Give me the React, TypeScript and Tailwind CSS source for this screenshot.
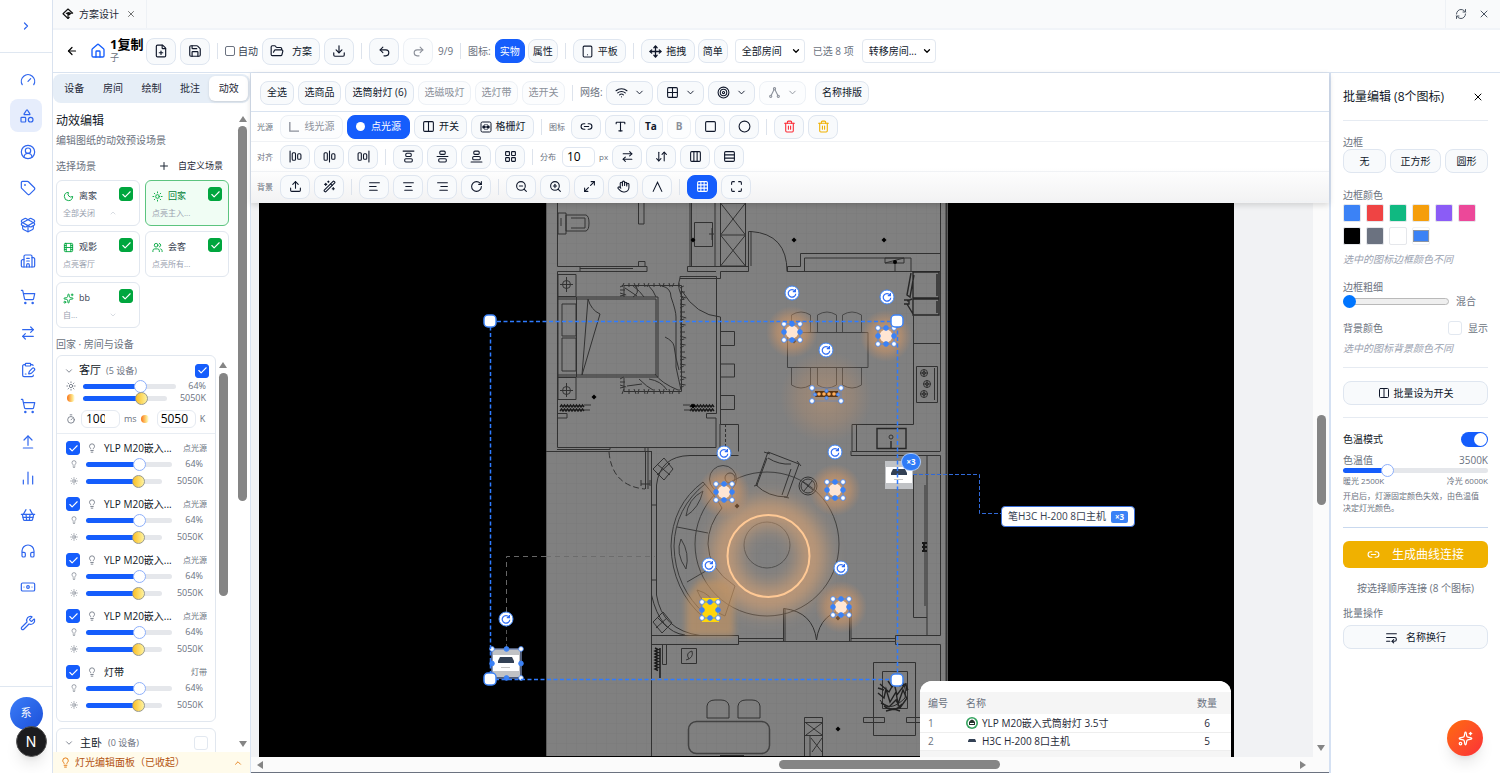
import React from "react";
import {
  AlignHorizontalJustifyCenter, AlignHorizontalJustifyEnd, AlignHorizontalJustifyStart,
  AlignVerticalJustifyCenter, AlignVerticalJustifyEnd, AlignVerticalJustifyStart,
  ArrowDownUp, ArrowLeft, ArrowRightLeft, ArrowUpFromLine, Banknote, Building2,
  ChartNoAxesColumn, Check, ChevronDown, ChevronRight, ChevronUp, Circle, CircleUserRound,
  ClipboardPenLine, Columns2, Columns3, Download, FilePlus, Film, FolderOpen, Gauge, Grid2x2, Grid3x3,
  Hand, Headphones, House, LayoutGrid, Lightbulb, Link2, Maximize, Maximize2, Moon, Move, PackageOpen,
  Plus, Redo2, RefreshCw, RotateCw, Rows3, Save, Shapes, ShoppingBasket, ShoppingCart, Sparkles, Square,
  Sun, Tablet, Tag, Target, TextAlignCenter, TextAlignEnd, TextAlignStart, TextWrap, Timer, Trash2, Type,
  Undo2, Upload, Users, WandSparkles, Wifi, Wrench, X, ZoomIn, ZoomOut,
} from "lucide-react";

const btn =
  "flex shrink-0 items-center justify-center rounded-lg border border-[#dfe6f0] bg-[#f8fafc] text-[10px] text-[#0f172a] whitespace-nowrap";
const btnOff =
  "flex shrink-0 items-center justify-center rounded-lg border border-[#edf1f6] bg-[#fcfdfe] text-[10px] text-[#8b909a] whitespace-nowrap";
const btnOn =
  "flex shrink-0 items-center justify-center rounded-lg border border-[#155dfc] bg-[#155dfc] text-[10px] text-white whitespace-nowrap";

function Sep() {
  return <span className="mx-[3px] h-4 w-px shrink-0 bg-[#dde3ec]" />;
}

function Tick({ label, tone, checked = true }: { label: string; tone: "blue" | "green"; checked?: boolean }) {
  return (
    <span className="grid shrink-0 place-items-center">
      <input
        type="checkbox"
        aria-label={label}
        defaultChecked={checked}
        className={
          tone === "green"
            ? "col-start-1 row-start-1 size-[14px] appearance-none rounded-[3px] border border-[#e2e8f0] bg-white checked:border-[#00a63e] checked:bg-[#00a63e]"
            : "col-start-1 row-start-1 size-[14px] appearance-none rounded-[3px] border border-[#e2e8f0] bg-white checked:border-[#155dfc] checked:bg-[#155dfc]"
        }
      />
      {checked && <Check className="pointer-events-none col-start-1 row-start-1 size-[11px] text-white" strokeWidth={2.4} />}
    </span>
  );
}

const sliderBase =
  "block h-[5px] min-w-0 appearance-none rounded-full [&::-webkit-slider-thumb]:appearance-none [&::-webkit-slider-thumb]:size-[13px] [&::-webkit-slider-thumb]:rounded-full [&::-webkit-slider-thumb]:border";
const brightThumb = "[&::-webkit-slider-thumb]:border-[#8eb0fb] [&::-webkit-slider-thumb]:bg-white";
const warmThumb =
  "[&::-webkit-slider-thumb]:border-[#9a9a8c] [&::-webkit-slider-thumb]:bg-[linear-gradient(to_right,#fbbf24,#fef3a0)]";

function Brightness({ label }: { label: string }) {
  return (
    <input type="range" aria-label={label} min={0} max={100} defaultValue={64}
      className={`${sliderBase} ${brightThumb} flex-1 bg-[linear-gradient(to_right,#155dfc_62%,#e5e7eb_62%)]`} />
  );
}
function Warmth({ label }: { label: string }) {
  return (
    <input type="range" aria-label={label} min={2500} max={6000} step={50} defaultValue={5050}
      className={`${sliderBase} ${warmThumb} flex-1 bg-[linear-gradient(to_right,#155dfc_69%,#e5e7eb_69%)]`} />
  );
}

function WarmDot() {
  return <span className="size-2 shrink-0 rounded-full bg-[linear-gradient(to_right,#f97316,#fde68a_70%,#fff)]" />;
}

function Arrow({ dir }: { dir: "up" | "down" | "left" | "right" }) {
  const d = { up: "M4 1 8 7H0Z", down: "M4 7 8 1H0Z", left: "M1 4 7 0V8Z", right: "M7 4 1 0V8Z" }[dir];
  return (
    <svg viewBox="0 0 8 8" className="size-2 shrink-0" fill="#858585"><path d={d} /></svg>
  );
}

const navIcons = [
  Gauge, Shapes, CircleUserRound, Tag, PackageOpen, Building2, ShoppingCart, ArrowRightLeft, ClipboardPenLine,
  ShoppingCart, ArrowUpFromLine, ChartNoAxesColumn, ShoppingBasket, Headphones, Banknote, Wrench,
];
const navNames = [
  "仪表盘", "方案", "账户", "标签", "产品", "公司", "采购", "调拨", "工单", "订单", "上传", "统计", "商城", "客服", "财务", "工具",
];

function SideNav() {
  return (
    <aside className="flex w-[53px] shrink-0 flex-col border-r border-[#d9e2ef] bg-white text-[#2f66ee]">
      <button aria-label="展开" className="flex h-[53px] shrink-0 items-center justify-center border-b border-[#dfe7f1]">
        <ChevronRight className="size-3" strokeWidth={2.4} />
      </button>
      <nav className="flex min-h-0 flex-1 flex-col items-center justify-between pt-[10px] pb-[46px] pl-1">
        {navIcons.map((Icon, i) => (
          <a key={i} href="#" aria-label={navNames[i]}
            className={i === 1 ? "-ml-1 flex h-[33px] w-8 items-center justify-center rounded-lg bg-[#e6edfc] pl-[2px]" : "flex h-[33px] w-8 items-center justify-center"}>
            <Icon className="size-4" strokeWidth={1.8} />
          </a>
        ))}
      </nav>
      <div className="flex h-[87px] shrink-0 flex-col items-center border-t border-[#dfe7f1] pt-[10px]">
        <button className="size-[33px] rounded-full bg-linear-to-br from-[#3b7cf8] to-[#1d4fd8] text-[11px] text-white">系</button>
        <button className="-mt-1 ml-[10px] size-[31px] rounded-full border border-[#555] bg-[#1c1c1e] font-['Inter',sans-serif] text-[14px] text-white shadow-lg">N</button>
      </div>
    </aside>
  );
}

function TabBar() {
  return (
    <div className="flex h-[30px] shrink-0 items-center border-b-2 border-[#f1f4f8] bg-[#f9fafb] text-[10px]">
      <div className="flex h-full items-center gap-1 border-r border-[#eef1f5] pr-[10px] pl-[9px]">
        <svg viewBox="0 0 24 24" className="mr-px size-3" fill="none" stroke="#111" strokeWidth="2.2">
          <path d="M22 11 12 2 2 11.500 12 21l3-3" strokeLinejoin="round" /><path d="M12 21v-8" /><path d="M7 11q5-6 14 0-4 0-5 3-3 2-5-1Z" fill="#111" stroke="none" />
        </svg>
        <a href="#" className="text-[#1f2937]">方案设计</a>
        <button aria-label="关闭标签"><X className="ml-[3px] size-2.5 text-[#555]" /></button>
      </div>
      <span className="flex-1" />
      <div className="flex h-full items-center gap-[11px] border-l border-[#eef1f5] pr-[10px] pl-[9px] text-[#4b5563]">
        <button aria-label="刷新"><RefreshCw className="size-3" /></button>
        <button aria-label="关闭"><X className="size-3" /></button>
      </div>
    </div>
  );
}

function Pick({ label, text, wide }: { label: string; text: string; wide?: boolean }) {
  return (
    <span className={wide ? "relative w-[74px]" : "relative w-[70px]"}>
      <select aria-label={label} className="h-6 w-full appearance-none rounded-sm border border-[#e2e8f0] bg-white pl-[6px] text-[10px] text-[#0f172a]">
        <option>{text}</option>
      </select>
      <ChevronDown className="pointer-events-none absolute top-[7px] right-1 size-[10px] text-black" strokeWidth={3} />
    </span>
  );
}

function Header() {
  return (
    <header className="flex h-[43px] shrink-0 items-center gap-1 border-b border-[#d9e3f0] bg-white pl-[13px] text-[10px] whitespace-nowrap text-[#6b7280]">
      <button aria-label="返回"><ArrowLeft className="mr-2 size-3 text-black" strokeWidth={2.4} /></button>
      <House className="size-4 shrink-0 text-[#155dfc]" />
      <div className="w-8 leading-[13px]">
        <h1 className="text-[13px] font-bold text-black">1复制</h1>
        <p className="text-[9px]">子</p>
      </div>
      <button aria-label="新建" className={`${btn} h-[27px] w-[30px]`}><FilePlus className="size-[14px]" /></button>
      <button aria-label="保存" className={`${btn} h-[27px] w-[30px]`}><Save className="size-[14px]" /></button>
      <Sep />
      <label className="flex items-center gap-[3px] text-[#374151]">
        <input type="checkbox" className="size-[10px] appearance-none rounded-xs border border-[#6b7280] bg-white" />自动
      </label>
      <button className={`${btn} h-[27px] w-[58px] gap-2`}><FolderOpen className="size-[14px]" />方案</button>
      <button aria-label="下载" className={`${btn} h-[27px] w-[30px]`}><Download className="size-[14px]" /></button>
      <Sep />
      <button aria-label="撤销" className={`${btn} h-[27px] w-[30px]`}><Undo2 className="size-[13px]" /></button>
      <button aria-label="重做" className={`${btnOff} h-[27px] w-[30px]`}><Redo2 className="size-[13px]" /></button>
      <span className="pl-px">9/9</span>
      <Sep />
      <span>图标:</span>
      <div className="flex gap-[3px]">
        <button className={`${btnOn} h-6 w-[30px]`}>实物</button>
        <button className={`${btn} h-6 w-[30px]`}>属性</button>
      </div>
      <Sep />
      <button className={`${btn} h-6 w-[53px] gap-1`}><Tablet className="size-[13px]" />平板</button>
      <Sep />
      <div className="flex gap-[3px]">
        <button className={`${btn} h-6 w-[54px] gap-1`}><Move className="size-[13px]" strokeWidth={2.4} />拖拽</button>
        <button className={`${btn} h-6 w-[30px]`}>简单</button>
      </div>
      <span className="ml-[3px] flex items-center gap-2">
        <Pick label="房间" text="全部房间" />
        <span>已选 8 项</span>
        <Pick label="转移房间" text="转移房间..." wide />
      </span>
    </header>
  );
}

type Scene = { name: string; note: string; icon: React.ElementType; active?: boolean; mark?: React.ElementType };
const scenes: Scene[] = [
  { name: "离家", note: "全部关闭", icon: Moon, mark: ChevronUp },
  { name: "回家", note: "点亮主入...", icon: Sun, active: true },
  { name: "观影", note: "点亮客厅", icon: Film },
  { name: "会客", note: "点亮所有...", icon: Users },
  { name: "bb", note: "自...", icon: Sparkles, mark: ChevronDown },
];

function SceneCard({ s }: { s: Scene }) {
  const Icon = s.icon;
  const Mark = s.mark;
  return (
    <div className={s.active
      ? "h-[46px] rounded-md border border-[#5cc47f] bg-[#f0fdf4] px-[6px] pt-[7px]"
      : "h-[46px] rounded-md border border-[#e1e7ef] bg-white px-[6px] pt-[7px]"}>
      <div className="flex h-4 items-center gap-[5px]">
        <Icon className="size-[11px] shrink-0 text-[#00a63e]" />
        <span className={s.active ? "flex-1 text-[9px] text-[#008236]" : "flex-1 text-[9px] text-[#374151]"}>{s.name}</span>
        <span className="-mt-1 flex"><Tick label={s.name} tone="green" /></span>
      </div>
      <div className="mt-[3px] flex items-center justify-between pr-4 text-[8px] leading-3 text-[#99a1af]">
        {s.note}{Mark && <Mark className="size-2 text-[#c4cad3]" />}
      </div>
    </div>
  );
}

const devices = [
  ["YLP M20嵌入...", "点光源"], ["YLP M20嵌入...", "点光源"], ["YLP M20嵌入...", "点光源"], ["YLP M20嵌入...", "点光源"], ["灯带", "灯带"],
];

function LeftPanel() {
  return (
    <section className="flex w-[198px] shrink-0 flex-col border-r border-[#d9e3f0] bg-white text-[#6b7280]">
      <div className="mt-px flex h-[29px] shrink-0 items-center rounded-lg bg-[#e6eef7] px-[2px] text-[10px] text-[#1f2937]">
        {["设备", "房间", "绘制", "批注", "动效"].map((t) => (
          <button key={t} className={t === "动效" ? "h-[25px] flex-1 rounded-md bg-white shadow-sm" : "h-[25px] flex-1"}>{t}</button>
        ))}
      </div>
      <div className="flex min-h-0 flex-1">
        <div className="flex w-[176px] shrink-0 flex-col overflow-hidden pt-2 pl-[3px]">
          <h2 className="text-[12px] leading-[20px] text-[#111827]">动效编辑</h2>
          <p className="text-[10px] leading-[18px]">编辑图纸的动效预设场景</p>
          <div className="mt-[7px] flex h-5 shrink-0 items-center justify-between pr-[6px] text-[10px]">
            选择场景
            <button className="flex items-center gap-2 text-[9px] text-[#1f2937]"><Plus className="size-3" />自定义场景</button>
          </div>
          <div className="mt-1 grid shrink-0 grid-cols-2 gap-[5px]">
            {scenes.map((s) => <SceneCard key={s.name} s={s} />)}
          </div>
          <p className="mt-2 shrink-0 text-[10px] leading-4">回家 · 房间与设备</p>
          <div className="mt-[3px] flex min-h-0 flex-1 overflow-hidden">
            <div className="w-[160px] shrink-0">
              <div className="rounded-md border border-[#e1e7ef] bg-white text-[9px]">
                <div className="h-[78px] border-b border-[#e8edf3] px-[6px] pt-[5px]">
                  <div className="flex h-[19px] items-center gap-[5px] pl-px">
                    <ChevronDown className="size-[10px]" />
                    <span className="text-[11px] text-[#111827]">客厅</span>
                    <span className="flex-1">(5 设备)</span>
                    <Tick label="客厅" tone="blue" />
                  </div>
                  <div className="flex h-3 items-center gap-[7px] pl-[3px]">
                    <Sun className="size-[10px] shrink-0" /><Brightness label="客厅亮度" />
                    <span className="w-[26px] pr-[3px] text-right">64%</span>
                  </div>
                  <div className="flex h-3 items-center gap-[8px] pl-1">
                    <WarmDot /><Warmth label="客厅色温" />
                    <span className="w-[34px] pr-[3px] text-right">5050K</span>
                  </div>
                  <div className="mt-[5px] flex h-5 items-center gap-1 pl-[3px]">
                    <Timer className="size-[10px] shrink-0" />
                    <input aria-label="渐变时间" defaultValue="1000" className="ml-px h-[18px] w-[39px] rounded-md border border-[#e5eaf1] pr-[14px] pl-1 text-[12px] text-black" />
                    ms<WarmDot />
                    <input aria-label="色温" defaultValue="5050" className="ml-1 h-[18px] w-[39px] rounded-md border border-[#e5eaf1] px-[3px] text-[12px] text-black" />
                    <span className="ml-auto pr-1">K</span>
                  </div>
                </div>
                <div className="flex flex-col gap-[5px] pt-[6px] pr-2 pb-[6px] pl-[9px]">
                  {devices.map(([name, kind], i) => (
                    <div key={i} className="h-[51px] shrink-0">
                      <div className="flex h-4 items-center gap-[7px]">
                        <Tick label={`${name} ${i + 1}`} tone="blue" />
                        <Lightbulb className="size-[10px] shrink-0" />
                        <span className="flex-1 text-[10px] whitespace-nowrap text-[#111827]">{name}</span>
                        <span className="text-[8px] whitespace-nowrap">{kind}</span>
                      </div>
                      <div className="flex h-4 items-center gap-2 pr-1 pl-1">
                        <Lightbulb className="size-2 shrink-0" /><Brightness label={`${name} ${i + 1} 亮度`} />
                        <span className="w-[23px] text-right">64%</span>
                      </div>
                      <div className="flex h-[18px] items-center gap-2 pr-1 pl-1">
                        <Sun className="size-2 shrink-0" /><Warmth label={`${name} ${i + 1} 色温`} />
                        <span className="w-[33px] text-right">5050K</span>
                      </div>
                    </div>
                  ))}
                </div>
              </div>
              <div className="mt-[6px] flex h-[30px] items-center gap-[6px] rounded-t-md border border-[#e1e7ef] px-[7px] text-[9px]">
                <ChevronDown className="size-[10px]" />
                <span className="text-[11px] leading-[14px] text-[#111827]">主卧</span>
                <span className="flex-1">(0 设备)</span>
                <Tick label="主卧" tone="blue" checked={false} />
              </div>
            </div>
          </div>
        </div>
        <div className="flex w-[21px] shrink-0">
          <div className="-ml-[12px] flex w-[12px] shrink-0 flex-col items-center gap-[4px] pt-[258px]">
            <Arrow dir="up" />
            <div className="h-[57%] w-[9px] rounded-full bg-[#858585]" />
          </div>
          <div className="flex flex-1 flex-col items-center gap-[3px] py-[12px] pl-[6px]">
            <Arrow dir="up" />
            <div className="h-[60%] w-[9px] rounded-full bg-[#858585]" />
            <span className="flex-1" />
            <span className="-mb-2 flex"><Arrow dir="down" /></span>
          </div>
        </div>
      </div>
      <button className="flex h-[21px] shrink-0 items-center gap-1 bg-[#fffbeb] px-[7px] text-[10px] text-[#b4530f]">
        <Lightbulb className="size-[11px] text-[#e17100]" />
        <span className="flex-1 text-left">灯光编辑面板（已收起）</span>
        <ChevronUp className="size-[10px] text-[#e17100]" />
      </button>
    </section>
  );
}

function IconBtn({ label, icon: Icon, off, on, red, gold, narrow }: {
  label: string; icon?: React.ElementType; off?: boolean; on?: boolean; red?: boolean; gold?: boolean; narrow?: string;
}) {
  return (
    <button aria-label={label} className={`${on ? btnOn : off ? btnOff : btn} h-6 ${narrow ? "w-6" : "w-[30px]"}`}>
      {Icon ? <Icon className={red ? "size-[13px] text-[#fb2c36]" : gold ? "size-[13px] text-[#f0b100]" : "size-[13px]"} /> : <b>{narrow}</b>}
    </button>
  );
}

function Branch({ className }: { className?: string }) {
  return (
    <svg viewBox="0 0 24 24" className={className} fill="none" stroke="currentColor" strokeWidth="2">
      <circle cx="12" cy="5" r="2" /><circle cx="5" cy="19" r="2" /><circle cx="19" cy="19" r="2" />
      <path d="M11 7 9 11l-3 6M13 7l2 4 3 6" />
    </svg>
  );
}
function Caret({ className }: { className?: string }) {
  return (
    <svg viewBox="0 0 24 24" className={className} fill="none" stroke="currentColor" strokeWidth="2" strokeLinecap="round"><path d="m4 21 8-17 8 17" /></svg>
  );
}
function Grille({ className }: { className?: string }) {
  return (
    <svg viewBox="0 0 24 24" className={className} fill="none" stroke="currentColor" strokeWidth="2">
      <rect x="2" y="2" width="20" height="20" rx="3" /><circle cx="8" cy="12" r="3.500" fill="currentColor" stroke="none" />
      <circle cx="16" cy="12" r="3.500" fill="currentColor" stroke="none" /><path d="M5 12h14M8 7h8M8 17h8" strokeWidth="1" />
    </svg>
  );
}

function Drop({ label, icon: Icon, off }: { label: string; icon: React.ElementType; off?: boolean }) {
  return (
    <button aria-label={label} className={`${off ? btnOff : btn} h-6 w-[47px] gap-[6px]`}>
      <Icon className="size-[13px]" /><ChevronDown className="size-[11px]" />
    </button>
  );
}

function ToolRows() {
  const row = "flex h-[30px] items-center gap-1 border-b border-[#f0f2f5] pl-[6px] text-[8px] whitespace-nowrap text-[#6b7280]";
  return (
    <div className="z-10 shrink-0 shadow-[0_2px_6px_rgba(0,0,0,0.15)]">
      <div className="flex h-[39px] items-center gap-1 border-b border-[#d9e3f0] bg-white pt-px pl-[9px] text-[10px] whitespace-nowrap text-[#6b7280]">
        <button className={`${btn} h-6 w-[34px]`}>全选</button>
        <button className={`${btn} h-6 w-[43px]`}>选商品</button>
        <button className={`${btn} h-6 w-[69px]`}>选筒射灯 (6)</button>
        <button className={`${btnOff} h-6 w-[53px]`}>选磁吸灯</button>
        <button className={`${btnOff} h-6 w-[43px]`}>选灯带</button>
        <button className={`${btnOff} h-6 w-[43px]`}>选开关</button>
        <Sep />
        <span className="w-[22px]">网络:</span>
        <Drop label="无线" icon={Wifi} /><Drop label="面板" icon={Grid2x2} /><Drop label="感应" icon={Target} /><Drop label="拓扑" icon={Branch} off />
        <button className={`${btn} ml-[5px] h-6 w-[54px]`}>名称排版</button>
      </div>
      <div className="bg-linear-to-b from-white from-60% to-[#f2f2f3] pb-px">
        <div className={row}>
          <span className="w-[19px]">光源</span>
          <button className={`${btnOff} h-6 w-[63px] gap-[6px]`}>
            <svg viewBox="0 0 12 12" className="size-[10px]" fill="none" stroke="currentColor" strokeWidth="1.6"><path d="M1 0v11h11" /></svg>线光源
          </button>
          <button className={`${btnOn} h-6 w-[63px] gap-[6px]`}><span className="size-[9px] rounded-full bg-white" />点光源</button>
          <button className={`${btn} h-6 w-[53px] gap-1`}><Columns2 className="size-[13px]" />开关</button>
          <button className={`${btn} h-6 w-[63px] gap-1`}><Grille className="size-[12px]" />格栅灯</button>
          <Sep />
          <span className="w-[18px]">图标</span>
          <IconBtn label="链接" icon={Link2} /><IconBtn label="文字" icon={Type} />
          <IconBtn label="字体" narrow="Ta" /><IconBtn label="粗体" narrow="B" off />
          <IconBtn label="方框" icon={Square} /><IconBtn label="圆框" icon={Circle} />
          <Sep />
          <IconBtn label="删除" icon={Trash2} red /><IconBtn label="清空" icon={Trash2} gold />
        </div>
        <div className={row}>
          <span className="w-[19px]">对齐</span>
          <IconBtn label="左对齐" icon={AlignHorizontalJustifyStart} /><IconBtn label="水平居中" icon={AlignHorizontalJustifyCenter} /><IconBtn label="右对齐" icon={AlignHorizontalJustifyEnd} />
          <Sep />
          <IconBtn label="顶对齐" icon={AlignVerticalJustifyStart} /><IconBtn label="垂直居中" icon={AlignVerticalJustifyCenter} /><IconBtn label="底对齐" icon={AlignVerticalJustifyEnd} /><IconBtn label="宫格" icon={LayoutGrid} />
          <Sep />
          <span className="w-[18px]">分布</span>
          <input aria-label="间距" defaultValue="10" className="h-5 w-[33px] rounded-md border border-[#dfe6f0] bg-white pl-1 text-[12px] text-black" />
          <span>px</span>
          <IconBtn label="水平分布" icon={ArrowRightLeft} /><IconBtn label="垂直分布" icon={ArrowDownUp} /><IconBtn label="等列" icon={Columns3} /><IconBtn label="等行" icon={Rows3} />
        </div>
        <div className={row}>
          <span className="w-[19px]">背景</span>
          <IconBtn label="上传背景" icon={Upload} /><IconBtn label="智能处理" icon={WandSparkles} />
          <Sep />
          <IconBtn label="居左" icon={TextAlignStart} /><IconBtn label="居中" icon={TextAlignCenter} /><IconBtn label="居右" icon={TextAlignEnd} /><IconBtn label="旋转" icon={RotateCw} />
          <Sep />
          <IconBtn label="缩小" icon={ZoomOut} /><IconBtn label="放大" icon={ZoomIn} /><IconBtn label="适应" icon={Maximize2} /><IconBtn label="平移" icon={Hand} /><IconBtn label="折线" icon={Caret} />
          <Sep />
          <IconBtn label="网格" icon={Grid3x3} on /><IconBtn label="全屏" icon={Maximize} />
        </div>
      </div>
    </div>
  );
}

/* ---- Floor plan drawing ---- */

const fringe = (x: number, y: number, n: number, dx: number, dy: number, lx: number, ly: number) =>
  Array.from({ length: n }, (_, i) => {
    const w = ((i * 7) % 5) - 2;
    return `M${x + i * dx} ${y + i * dy}l${lx + (ly ? w : w * 0.6)} ${ly + (lx ? w : 0)}`;
  }).join("");
const zig = (x: number, y: number, n: number) => `M${x} ${y}` + "l1.5 -2l1.5 2".repeat(n);
const diamonds = [[794, 240], [884, 240], [693, 240], [594, 397], [693, 406], [737, 506], [838, 729], [838, 618], [794, 341]];

function Spin({ x, y }: { x: number; y: number }) {
  return (
    <g>
      <circle cx={x} cy={y} r="7" fill="#fff" stroke="#3b82f6" strokeWidth="1" />
      <path d={`M${x + 3} ${y - 2}A3.8 3.8 0 1 0 ${x + 3.8} ${y + 0.8}M${x + 3.4} ${y - 4}v2.6h-2.6`} fill="none" stroke="#2f6df6" strokeWidth="1.2" />
    </g>
  );
}

function Handles({ x, y, w, h }: { x: number; y: number; w: number; h: number }) {
  return (
    <g stroke="#3b82f6" strokeWidth="0.8">
      <rect x={x - w} y={y - h} width={w * 2} height={h * 2} fill="none" />
      {[[0, -h], [0, h], [-w, 0], [w, 0]].map(([a, b], i) => <circle key={i} cx={x + a} cy={y + b} r="2.4" fill="#3b82f6" />)}
      {[[-w, -h], [w, -h], [-w, h], [w, h]].map(([a, b], i) => <circle key={i} cx={x + a} cy={y + b} r="2.4" fill="#fff" />)}
    </g>
  );
}

function HostIcon({ x, y }: { x: number; y: number }) {
  return (
    <g>
      <rect x={x - 14} y={y - 14} width="28" height="28" fill="#c0c2c5" />
      <rect x={x - 13} y={y - 8} width="26" height="16" fill="#fff" />
      <path d={`M${x - 8} ${y - 2}l2 -4h12l2 4v2h-16Z`} fill="#334155" />
      <path d={`M${x - 5} ${y + 4.5}h9`} stroke="#b6b6b6" strokeWidth="0.8" />
    </g>
  );
}

function FloorPlan() {
  return (
    <svg viewBox="259 203 975 553" width="975" height="553" className="absolute top-0 left-0 max-w-none">
      <defs>
        <pattern id="grid" x="546" y="203" width="10" height="10" patternUnits="userSpaceOnUse">
          <path d="M10 0H0V10" fill="none" stroke="#000" strokeOpacity="0.035" strokeWidth="1" />
        </pattern>
        <radialGradient id="glow">
          <stop offset="0" stopColor="#f0a868" stopOpacity="0.75" /><stop offset="0.6" stopColor="#e09a60" stopOpacity="0.42" /><stop offset="1" stopColor="#d09060" stopOpacity="0" />
        </radialGradient>
        <filter id="soft" x="-50%" y="-50%" width="200%" height="200%"><feGaussianBlur stdDeviation="9" /></filter>
        <filter id="soft2" x="-50%" y="-50%" width="200%" height="200%"><feGaussianBlur stdDeviation="3" /></filter>
      </defs>
      <rect x="546" y="203" width="402" height="553" fill="#808080" />
      <rect x="546" y="203" width="402" height="553" fill="url(#grid)" />

      <g fill="none" stroke="#1f1f1f" strokeWidth="1" opacity="0.8">
        <path d="M946.500 203V756" stroke="#222" strokeWidth="2" />
        <path d="M546.500 203V756" stroke="#555" />
        <path d="M557.500 203V266.500H647V271.500H557.500V447.500H716V418H706.500V413.500H716.500V276.500H680V278.500H720.500V271.500H748.500V266.500H687.500V271.500H716" />
        <path d="M580 268.500H633M580 266.500v5M638.500 203V224H644V203M638.500 266V261.500H645V266M691.500 203V266.500H716.500M720.500 203h25V266h-25ZM720.500 203l25 32-25 31M745.500 203l-25 32 25 31M720.500 235h25M690 203V266M715 203V266" />
        <path d="M558 213h8v21h-8zM566 215h20q3 1 3 8t-3 8h-20zM571 218h14v10h-14M561 218v8" />
        <path d="M694.500 222.500h18v24h-18zM709 234h5M712 228v12" />
        <path d="M748.500 271V231.500H751V266M751 231.500Q787 234 787 271.500M787.500 271.500V266.500H800.500V253.500H940.500M804.500 271.500V258H911V271.500M787 271.500H940M940.500 203V451.500M885 258h19v5h-19zM885 263l19-5M895 262v10" />
        <path d="M682 291Q696 315 720.500 317V424.500H738.500V451.500M720.500 331.500h14v14h-14M720.500 364h14v13h-14M720.500 395.500h14v14h-14" />
        <path d="M557.500 413.500H567V418H557.500M546 451.500H651M557 449.500H610V447M645 447V452M648 447V452M720 424V451" />
        <path d="M558 297h100v80H558zM558 299h98v76H558M576.500 297V377M562 304h14v32h-14zM562 338h14v33h-14zM588 299L582 375 600 314Q591 310 588 299" />
        <path d="M558 274.500h18v22h-18zM558 377.500h18v22h-18zM560 284.500h13M566.500 277v15M560 390.500h13M566.500 383v14" />
        <circle cx="566.500" cy="284.500" r="4" /><circle cx="566.500" cy="390.500" r="4" />
        <path d="M624 297V285.500H681.500V391.500H624V378" />
        <path d="M632 285q9 7 12 12M648 285q6 6 8 12M662 286q9 2 9 11q5 14 5 20v50q3 14 5 23M665 337q8 4 9 9q1 10 5 24M636 286q4 7-3 11M655 374q6 9 23 16M649 379q12 2 18 11M639 379q8 8 14 11M684 300q-8-12-4-22M625 288l12 8M627 386l15-2M681 300v70" />
        <path d={fringe(624, 283, 12, 5, 0, 0, 4)} /><path d={fringe(624, 389, 12, 5, 0, 0, 5)} />
        <path d={fringe(680, 288, 26, 0, 4, 5, 0)} /><path d={fringe(620, 287, 4, 0, 3, 5, 0)} /><path d={fringe(620, 379, 4, 0, 3, 5, 0)} />
        <path d={zig(560, 407, 8) + zig(560, 411, 8) + zig(690, 407, 8) + zig(690, 411, 8)} stroke="#000" strokeWidth="1.4" />
        <path d="M584 405h7M584 410h6M683 405h7M684 410h7" />
        <path d="M913 272h26v26h-26zM913 299h26v16h-26zM937 274v22M937 301v12M911 273l-4 22 3 2 4-22M907 301l5-2M907 304l6 10M904 300h5v4h-5" stroke="#111" strokeWidth="1.400" />
        <path d="M940 343.500H913.500M913.500 315V424.500H852V451.500H940M856.500 424V451" />
        <path d="M916.500 366.500h21v36h-21zM934.500 368v32" />
        {[[924, 373], [927, 384], [924, 394]].map(([x, y]) => <g key={y}><circle cx={x} cy={y} r="3.500" /><circle cx={x} cy={y} r="1.500" /><path d={`M${x - 4} ${y}h8M${x} ${y - 4}v8`} /></g>)}
        <path d="M877 428.500h29v20h-29zM891 441v8" stroke="#111" strokeWidth="1.4" /><circle cx="891" cy="437" r="2" />
        <path d="M791.500 332V315Q801 309 810.500 315V332M817.500 332V315Q827 309 836.500 315V332M842.500 332V315Q852 309 861.500 315V332M791.500 367V385Q801 391 810.500 385V367M817.500 367V385Q827 391 836.500 385V367M842.500 367V385Q852 391 861.500 385V367" stroke="#3c3c3c" />
        <path d="M787.500 332.500H868V367.500H787.500Z" stroke="#333" />
        <path d="M651.500 451V756M656.500 500V485Q660 456 690 455.500H738.500M656.500 500V595Q662 630 700 635.500M651.500 595Q660 632 685 635M651.500 505H656M651.500 580H656M651.500 635.500H738.500V644.500H651.500M738.500 638.500H783M738.500 641.500H895.500V635.500H940.500V455.500H851V451M851 638.500H895M895.500 641.500V644.500H940.500V756" />
        <path d="M609 452Q612 486 645 489" strokeDasharray="6 3" /><path d="M645.500 451V489M648 451V489M641 484h9M641 480v6M650 480v6" />
        <path d="M653 469l11-11 9 11-9 11ZM657 464l13 11M670 463l-13 12M653 622l10-10 9 11-10 10ZM657 617l11 11M668 617l-12 11" />
        <circle cx="767" cy="544" r="72" stroke="#303030" /><circle cx="767" cy="545" r="23" stroke="#444" />
        <path d="M703 482Q672 505 671 546 672 590 704 618M705 484Q675 508 674 546 675 588 706 615M703 482Q716 497 722 508 708 525 708 544 708 568 735 586L725 616 706 607M677 527l31 6M687 582l24-14M686 516Q688 499 703 491 699 508 686 516M681 539q-6 14 5 30 4-16-5-30M697 590q15 4 18 17-13-3-18-17" stroke="#2b2b2b" />
        <path d="M768 452l31 12-12 33Q768 497 756 485ZM767 458l-10 27M791 469l-9 26M768 458q11 7 23 6M764 452l6 2M797 461l4 5M754 486l4-1M784 497l5 1" />
        <circle cx="808" cy="486" r="9" /><circle cx="808" cy="486" r="7" /><path d="M803 482l10 8M812 481l-8 10" />
        <circle cx="723" cy="479" r="13.500" stroke="#333" /><circle cx="730" cy="478" r="5" />
        <path d="M783.500 641V608.500H785V641M784 608.500Q813 612 816.500 640Q820 612 849 608.500M849.500 641V608.500H851V641M927 455V635M913.500 474V617.500H927M925 485V606" />
        <path d="M922 543h5M922 547h5M922 551h5M924 543v9" stroke="#000" strokeWidth="2" />
        <path d="M662.500 644V664.500H666.500V644M681.500 648.500h15v15h-15zM686 660q8-2 6-9-7 2-3 8M873.500 662.500h42v73h-42zM882.500 671.500h25v37h-25zM863.500 717.500h21v5h-21zM906.500 717.500h14v5h-14z" />
        <path d="M655 648l3 1.500-3 1.500 3 1.500-3 1.500 3 1.500-3 1.500 3 1.500-3 1.500 3 1.500-3 1.500 3 1.500-3 1.500 3 1.500-3 1.500 3 1.500M660 648v30" stroke="#000" strokeWidth="1.500" />
        <path d="M878 693l6 5 2-9 4 13 6-10 2 12 5-14 4 9M881 703l8 4 7-7 4 8 7-10M880 684l9 8 5-9 3 12 8-11 3 6M886 711l8-2 6 2M888 681l4 6 4-5M878 688l6 2M884 706q10 8 18-2M899 686l7-2 1 7" stroke="#0b0b0b" strokeWidth="1.400" />
        <path d="M880 700q9 14 25-2q2-9-3-17" stroke="#111" />
        <path d="M707 718V706q1-6 8-6h6q7 0 8 6v12ZM738 718V706q1-6 8-6h6q7 0 8 6v12ZM804.500 756V717.500H822.500V756M804 722.500h18M804 735.500h18M806 723l16 12M822 723l-16 12M810 736V756M811 738l11 14M822 738l-10 14" />
        <rect x="688.500" y="721.500" width="81" height="32" rx="8" stroke="#333" strokeWidth="1.500" /><path d="M720 755.500h24" />
        <path d="M725.500 424V447" strokeDasharray="3 2" />
      </g>
      <g fill="#000">
        {diamonds.map(([x, y], i) => <path key={i} d={`M${x} ${y - 2.5}l2.500 2.500-2.500 2.500-2.500-2.500Z`} />)}
        <circle cx="895" cy="262" r="2" />
      </g>

      <circle cx="768.500" cy="556" r="44" fill="none" stroke="#e8a870" strokeOpacity="0.6" strokeWidth="26" filter="url(#soft)" />
      <circle cx="768.500" cy="556" r="41" fill="none" stroke="#ffc995" strokeWidth="2" />
      <circle cx="826" cy="397" r="46" fill="url(#glow)" opacity="0.45" />
      <path d="M699 580H722Q734 585 734 600V636H686V598Z" fill="#c9955f" opacity="0.6" filter="url(#soft2)" />
      {[[792, 332], [886, 336], [724, 492], [835, 490], [841, 607]].map(([x, y]) => (
        <g key={x}><circle cx={x} cy={y} r="26" fill="url(#glow)" /><circle cx={x} cy={y} r="6.500" fill="#ffe6d3" /><Handles x={x} y={y} w={8} h={8} /></g>
      ))}
      <rect x="702" y="598" width="17" height="24" fill="#ffd60a" /><Handles x={710} y={610} w={8} h={8} />
      <rect x="815" y="391" width="23" height="6" fill="#5d3512" />
      {[819, 824, 829, 834].map((x) => <circle key={x} cx={x} cy="394" r="1.800" fill="#ffae5c" />)}
      <g stroke="#3b82f6" strokeWidth="0.8">
        <rect x="812" y="388" width="29" height="13" fill="none" strokeOpacity="0.5" />
        {[[812, 388], [841, 388], [812, 401], [841, 401]].map(([x, y]) => <circle key={`${x}-${y}`} cx={x} cy={y} r="2.400" fill="#fff" />)}
        {[[826.5, 391], [826.5, 398], [815, 394.5], [838, 394.5]].map(([x, y]) => <circle key={`${x}-${y}`} cx={x} cy={y} r="1.600" fill="#6b9cf0" />)}
      </g>

      <path d="M506.500 612V556.500H546" fill="none" stroke="#666" strokeDasharray="5 4" />
      <path d="M546 556.500H655" fill="none" stroke="#6c6c6c" strokeDasharray="5 4" />
      <path d="M506.500 648V626" stroke="#555" strokeDasharray="4 3" />
      <HostIcon x={899} y={475} /><HostIcon x={506} y={663} />
      <rect x="492" y="649" width="29" height="29" fill="none" stroke="#c08a50" /><Handles x={506.5} y={663.5} w={14.5} h={14.5} />
      <path d="M913 474.500H979.500V513.500H1001" fill="none" stroke="#3069d8" strokeDasharray="4 2" />
      <rect x="490.500" y="321.500" width="407" height="358" fill="none" stroke="#2f7bff" strokeWidth="1.500" strokeDasharray="4 2.500" />
      {[[490, 321], [897, 321], [490, 679], [897, 680]].map(([x, y], i) => (
        <rect key={i} x={x - 6} y={y - 6} width="12" height="12" rx="4" fill="#fff" stroke="#3b82f6" strokeWidth="1.500" />
      ))}
      {[[792, 293], [887, 297], [826, 350], [724, 453], [835, 452], [709, 565], [841, 568], [506, 619]].map(([x, y]) => <Spin key={`${x}-${y}`} x={x} y={y} />)}
    </svg>
  );
}

function PartsTable() {
  return (
    <div className="absolute right-[3px] bottom-0 h-[76px] w-[311px] overflow-hidden rounded-t-xl bg-[#f5f5f5]">
      <div className="h-[11px] bg-white" />
      <table className="w-full border-collapse text-left text-[10px] leading-[14px] text-[#1f2937]">
        <thead>
          <tr className="h-[22px] text-[#6b7280]">
            <th className="w-[42px] pl-2 font-normal">编号</th><th className="pl-1 font-normal">名称</th><th className="w-[48px] text-center font-normal">数量</th>
          </tr>
        </thead>
        <tbody className="bg-white">
          <tr className="h-[18px] border-b border-[#eee]">
            <td className="pl-2 text-[#6b7280]">1</td>
            <td className="pl-1"><span className="flex items-center gap-1">
              <svg viewBox="0 0 12 12" className="size-3"><circle cx="6" cy="6" r="6" fill="#35a35f" /><circle cx="6" cy="6" r="4.400" fill="#fff" /><path d="M3 5q3-5 6 0v3H3Z" fill="#26352c" /><path d="M4 6.500h4" stroke="#fff" /></svg>
              YLP M20嵌入式筒射灯 3.5寸</span></td>
            <td className="text-center">6</td>
          </tr>
          <tr className="h-[18px] border-b border-[#eee]">
            <td className="pl-2 text-[#6b7280]">2</td>
            <td className="pl-1"><span className="flex items-center gap-1">
              <svg viewBox="0 0 12 12" className="size-3"><path d="M2 6l1-2h6l1 2v1H2Z" fill="#334155" /></svg>
              H3C H-200 8口主机</span></td>
            <td className="text-center">5</td>
          </tr>
        </tbody>
      </table>
    </div>
  );
}

function Canvas() {
  return (
    <div className="flex min-h-0 flex-1 flex-col bg-[#fbfbfb]">
      <div className="flex min-h-0 flex-1">
        <div className="flex min-w-0 flex-1 bg-[#f1f2f4] pr-[79px] pl-2">
          <div className="relative min-w-0 flex-1 overflow-hidden bg-black">
            <FloorPlan />
            <span className="absolute top-[251px] left-[643px] flex h-4 w-[18px] items-center justify-center rounded-full bg-[#2f7bf6] text-[8px] font-bold text-white ring-1 ring-[#a8c8fb]">×3</span>
            <div className="absolute top-[303px] left-[742px] flex h-[21px] items-center gap-[5px] rounded-sm border border-[#3b6fd8] bg-white px-[6px] text-[10px] whitespace-nowrap text-[#374151]">
              笔H3C H-200 8口主机<b className="rounded-xs bg-[#3b82f6] px-1 text-[8px] leading-[12px] text-white">×3</b>
            </div>
            <PartsTable />
          </div>
        </div>
        <div className="flex w-4 shrink-0 flex-col items-center justify-end pb-[5px]">
          <div className="mb-auto h-[55%] w-[9px] pt-[212px]"><div className="h-[90px] rounded-full bg-[#858585]" /></div>
          <Arrow dir="down" />
        </div>
      </div>
      <div className="flex h-4 shrink-0 items-center border-b border-[#6b7280] pr-[22px] pl-[5px]">
        <Arrow dir="left" />
        <div className="ml-[49%] h-[9px] w-[21%] rounded-full bg-[#858585]" />
        <span className="flex-1" />
        <Arrow dir="right" />
      </div>
    </div>
  );
}

function RightPanel() {
  const rule = "shrink-0 border-[#e6ebf2]";
  const swatches = ["bg-[#3b82f6]", "bg-[#ef4444]", "bg-[#10b981]", "bg-[#f59e0b]", "bg-[#8b5cf6]", "bg-[#ec4899]", "bg-black", "bg-[#6b7280]", "bg-white"];
  return (
    <aside className="flex w-[171px] shrink-0 flex-col border-l-2 border-[#d5e1f3] bg-white pr-3 pl-[12px] text-[10px] text-[#6b7280]">
      <div className="flex h-[47px] shrink-0 items-center justify-between pr-1 text-[#111827]">
        <h2 className="text-[12px]">批量编辑 (8个图标)</h2>
        <button aria-label="关闭面板"><X className="size-3 text-black" /></button>
      </div>
      <hr className={rule} />
      <p className="mt-[14px] leading-[14px]">边框</p>
      <div className="grid h-6 shrink-0 grid-cols-[11fr_13fr_11fr] gap-1">
        <button className={btn}>无</button><button className={btn}>正方形</button><button className={btn}>圆形</button>
      </div>
      <p className="mt-[15px] leading-[14px]">边框颜色</p>
      <div className="mt-[2px] grid grid-cols-[repeat(6,18px)] gap-[5px]">
        {swatches.map((c) => <button key={c} aria-label="边框颜色" className={`${c} size-[18px] rounded-xs border border-[#e5e7eb]`} />)}
        <button aria-label="自定义颜色" className="flex size-[18px] items-center justify-center rounded-xs border border-[#f0f2f5]"><span className="h-3 w-4 border border-[#8b95a5] bg-[#3b82f6]" /></button>
      </div>
      <p className="mt-[7px] leading-[14px] text-[#99a1af] italic">选中的图标边框颜色不同</p>
      <p className="mt-[14px] leading-[14px]">边框粗细</p>
      <div className="flex h-[15px] items-center gap-[7px]">
        <input type="range" aria-label="边框粗细" defaultValue={0}
          className="h-[7px] w-[106px] appearance-none rounded-full border border-[#b9b9b9] bg-[#efefef] [&::-webkit-slider-thumb]:-ml-px [&::-webkit-slider-thumb]:size-[13px] [&::-webkit-slider-thumb]:appearance-none [&::-webkit-slider-thumb]:rounded-full [&::-webkit-slider-thumb]:bg-[#0075ff]" />
        混合
      </div>
      <div className="mt-[11px] flex h-4 items-center justify-between">
        背景颜色<label className="flex items-center gap-[6px]"><Tick label="显示背景颜色" tone="blue" checked={false} />显示</label>
      </div>
      <p className="mt-[5px] leading-[14px] text-[#99a1af] italic">选中的图标背景颜色不同</p>
      <hr className={`${rule} mt-3`} />
      <button className={`${btn} mt-[13px] h-6 gap-1`}><Columns2 className="size-3" />批量设为开关</button>
      <hr className={`${rule} mt-3`} />
      <div className="mt-[13px] flex h-4 items-center justify-between text-[#111827]">
        色温模式
        <button role="switch" aria-checked="true" aria-label="色温模式" className="flex h-[15px] w-[27px] items-center justify-end rounded-full bg-[#155dfc] px-px"><span className="size-[13px] rounded-full bg-white" /></button>
      </div>
      <div className="mt-[6px] flex h-[15px] items-center justify-between"><span>色温值</span><span>3500K</span></div>
      <input type="range" aria-label="色温值" min={2500} max={6000} defaultValue={3500}
        className={`${sliderBase} ${brightThumb} w-full shrink-0 bg-[linear-gradient(to_right,#155dfc_30%,#e5e7eb_30%)]`} />
      <div className="mt-px flex h-[14px] items-center justify-between text-[8px]"><span>暖光 2500K</span><span>冷光 6000K</span></div>
      <p className="mt-[2px] pr-[6px] text-[8px] leading-[12px]">开启后，灯源固定颜色失效，由色温值决定灯光颜色。</p>
      <hr className="mt-[13px] shrink-0 border-[#c9d9ef]" />
      <button className="mt-[13px] flex h-[27px] shrink-0 items-center justify-center gap-3 rounded-md bg-[#f0b100] text-[12px] text-white"><Link2 className="size-[13px]" />生成曲线连接</button>
      <p className="mt-3 text-center leading-4">按选择顺序连接 (8 个图标)</p>
      <p className="mt-[10px] leading-[14px]">批量操作</p>
      <button className={`${btn} mt-[5px] h-6 gap-2`}><TextWrap className="size-[13px]" />名称换行</button>
      <button aria-label="智能助手" className="mt-auto mr-[5px] mb-[17px] flex size-9 shrink-0 items-center justify-center self-end rounded-full bg-linear-to-br from-[#ff6a00] to-[#fb2c36] text-white shadow-lg"><Sparkles className="size-[15px]" /></button>
    </aside>
  );
}

export default function App() {
  return (
    <div className="flex h-screen overflow-hidden bg-white font-['Open_Sans','Noto_Sans_CJK_SC',sans-serif]">
      <SideNav />
      <div className="flex min-w-0 flex-1 flex-col">
        <TabBar />
        <Header />
        <div className="flex min-h-0 flex-1">
          <LeftPanel />
          <main className="flex min-w-0 flex-1 flex-col">
            <ToolRows />
            <Canvas />
          </main>
          <RightPanel />
        </div>
      </div>
    </div>
  );
}
